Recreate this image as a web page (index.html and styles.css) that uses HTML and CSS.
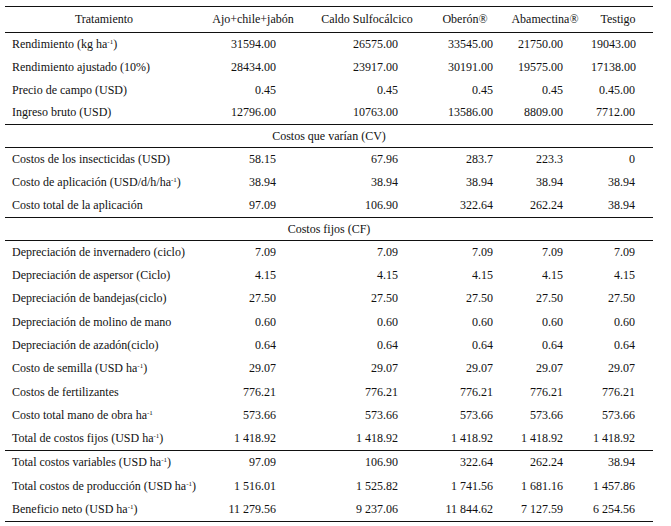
FILE: index.html
```html
<!DOCTYPE html>
<html lang="es">
<head>
<meta charset="utf-8">
<title>Costos</title>
<link rel="stylesheet" href="styles.css">
</head>
<body>
<table class="tbl">
  <colgroup>
    <col class="c1"><col class="c2"><col class="c3"><col class="c4"><col class="c5"><col class="c6">
  </colgroup>
  <thead>
    <tr class="head">
      <th>Tratamiento</th><th>Ajo+chile+jabón</th><th>Caldo Sulfocálcico</th><th>Oberón®</th><th>Abamectina®</th><th class="h6">Testigo</th>
    </tr>
  </thead>
  <tbody>
    <tr><td>Rendimiento (kg ha<sup>-1</sup>)</td><td>31594.00</td><td>26575.00</td><td>33545.00</td><td>21750.00</td><td>19043.00</td></tr>
    <tr><td>Rendimiento ajustado (10%)</td><td>28434.00</td><td>23917.00</td><td>30191.00</td><td>19575.00</td><td>17138.00</td></tr>
    <tr><td>Precio de campo (USD)</td><td>0.45</td><td>0.45</td><td>0.45</td><td>0.45</td><td>0.45.00</td></tr>
    <tr class="rule"><td>Ingreso bruto (USD)</td><td>12796.00</td><td>10763.00</td><td>13586.00</td><td>8809.00</td><td>7712.00</td></tr>
    <tr class="sec rule"><td colspan="6">Costos que varían (CV)</td></tr>
    <tr><td>Costos de los insecticidas (USD)</td><td>58.15</td><td>67.96</td><td>283.7</td><td>223.3</td><td>0</td></tr>
    <tr><td>Costo de aplicación (USD/d/h/ha<sup>-1</sup>)</td><td>38.94</td><td>38.94</td><td>38.94</td><td>38.94</td><td>38.94</td></tr>
    <tr class="rule tall"><td>Costo total de la aplicación</td><td>97.09</td><td>106.90</td><td>322.64</td><td>262.24</td><td>38.94</td></tr>
    <tr class="sec rule"><td colspan="6">Costos fijos (CF)</td></tr>
    <tr><td>Depreciación de invernadero (ciclo)</td><td>7.09</td><td>7.09</td><td>7.09</td><td>7.09</td><td>7.09</td></tr>
    <tr><td>Depreciación de aspersor (Ciclo)</td><td>4.15</td><td>4.15</td><td>4.15</td><td>4.15</td><td>4.15</td></tr>
    <tr class="tall"><td>Depreciación de bandejas(ciclo)</td><td>27.50</td><td>27.50</td><td>27.50</td><td>27.50</td><td>27.50</td></tr>
    <tr><td>Depreciación de molino de mano</td><td>0.60</td><td>0.60</td><td>0.60</td><td>0.60</td><td>0.60</td></tr>
    <tr><td>Depreciación de azadón(ciclo)</td><td>0.64</td><td>0.64</td><td>0.64</td><td>0.64</td><td>0.64</td></tr>
    <tr class="tall"><td>Costo de semilla (USD ha<sup>-1</sup>)</td><td>29.07</td><td>29.07</td><td>29.07</td><td>29.07</td><td>29.07</td></tr>
    <tr><td>Costos de fertilizantes</td><td>776.21</td><td>776.21</td><td>776.21</td><td>776.21</td><td>776.21</td></tr>
    <tr><td>Costo total mano de obra ha<sup>-1</sup></td><td>573.66</td><td>573.66</td><td>573.66</td><td>573.66</td><td>573.66</td></tr>
    <tr class="rule tall"><td>Total de costos fijos (USD ha<sup>-1</sup>)</td><td>1 418.92</td><td>1 418.92</td><td>1 418.92</td><td>1 418.92</td><td>1 418.92</td></tr>
    <tr class="tall"><td>Total costos variables (USD ha<sup>-1</sup>)</td><td>97.09</td><td>106.90</td><td>322.64</td><td>262.24</td><td>38.94</td></tr>
    <tr class="tall"><td>Total costos de producción (USD ha<sup>-1</sup>)</td><td>1 516.01</td><td>1 525.82</td><td>1 741.56</td><td>1 681.16</td><td>1 457.86</td></tr>
    <tr class="rule"><td>Beneficio neto (USD ha<sup>-1</sup>)</td><td>11 279.56</td><td>9 237.06</td><td>11 844.62</td><td>7 127.59</td><td>6 254.56</td></tr>
  </tbody>
</table>
</body>
</html>
```
FILE: styles.css
```css
html, body {
  margin: 0;
  padding: 0;
  background: #ffffff;
}

.tbl {
  margin: 6px 0 0 5px;
  width: 648px;
  table-layout: fixed;
  border-collapse: separate;
  border-spacing: 0;
  border-top: 1px solid #111111;
  font-family: "Liberation Serif", serif;
  font-size: 12px;
  color: #111111;
}

.c1 { width: 198px; }
.c2 { width: 100px; }
.c3 { width: 128px; }
.c4 { width: 68px; }
.c5 { width: 92px; }
.c6 { width: 62px; }

.tbl th,
.tbl td {
  box-sizing: border-box;
  padding: 0;
  height: 23px;
  vertical-align: middle;
  white-space: nowrap;
  font-family: "Liberation Serif", serif;
  font-weight: normal;
  line-height: 14px;
}

.head th {
  height: 26px;
  padding-bottom: 2px;
  text-align: center;
  border-bottom: 1px solid #111111;
}

.head .h6 {
  padding-right: 8px;
}

.tbl td {
  text-align: right;
  padding-bottom: 2px;
}

.tbl td:nth-child(1) { text-align: left; padding-left: 7px; }
.tbl td:nth-child(2) { padding-right: 27px; }
.tbl td:nth-child(3) { padding-right: 33px; }
.tbl td:nth-child(4) { padding-right: 6px; }
.tbl td:nth-child(5) { padding-right: 28px; }
.tbl td:nth-child(6) { padding-right: 18px; }

.tall td { height: 24px; }

.rule td { border-bottom: 1px solid #111111; }

.sec td,
.sec td:nth-child(1) {
  text-align: center;
  padding: 0 0 1px 0;
}

sup {
  font-size: 7px;
  line-height: 0;
  vertical-align: 4px;
}
```
